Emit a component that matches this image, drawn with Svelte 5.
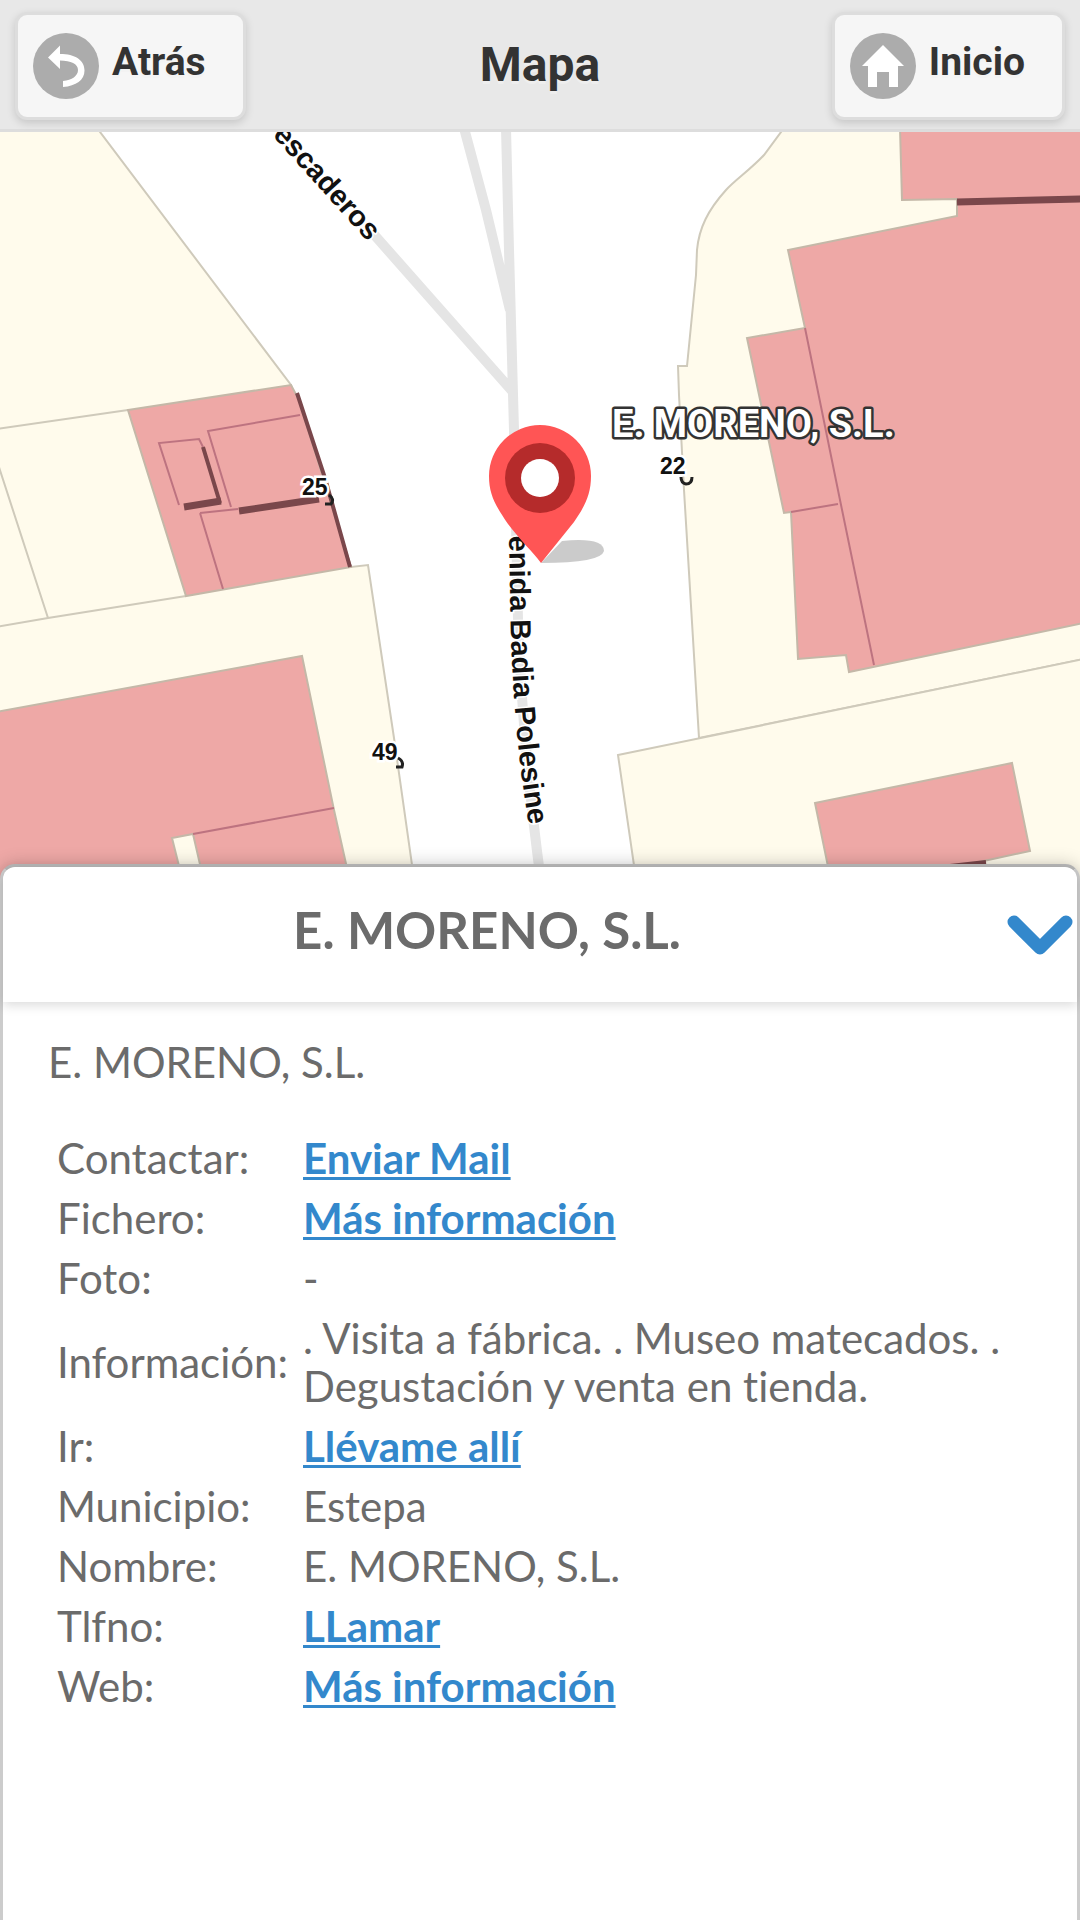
<script>
  const rows = [
    { label: 'Contactar:', value: 'Enviar Mail', href: '#mail' },
    { label: 'Fichero:', value: 'Más información', href: '#fichero' },
    { label: 'Foto:', value: '-' },
    { label: 'Información:', value: '. Visita a fábrica. . Museo matecados. . Degustación y venta en tienda.' },
    { label: 'Ir:', value: 'Llévame allí', href: '#ir' },
    { label: 'Municipio:', value: 'Estepa' },
    { label: 'Nombre:', value: 'E. MORENO, S.L.' },
    { label: 'Tlfno:', value: 'LLamar', href: '#tel' },
    { label: 'Web:', value: 'Más información', href: '#web' }
  ];
</script>

<div class="page">
  <header class="bar">
    <button class="nav" type="button">
      <svg class="disc" viewBox="0 0 66 66" aria-hidden="true">
        <circle cx="33" cy="33" r="33" fill="#acacac" />
        <path d="M15 24.500 27 12.500V21c15 0 24.500 6 24.500 16.500C51.500 47 43 53 30 54v-6c9-1 15-5 15-11 0-6-7-9.500-18-9.500V36Z" fill="#fff" />
      </svg>
      <span>Atrás</span>
    </button>
    <h1>Mapa</h1>
    <button class="nav" type="button">
      <svg class="disc" viewBox="0 0 66 66" aria-hidden="true">
        <circle cx="33" cy="33" r="33" fill="#acacac" />
        <path d="M33 12 54 33H48V54H39V39H27V54H18V33H12Z" fill="#fff" />
      </svg>
      <span>Inicio</span>
    </button>
  </header>

  <main>
    <svg class="map" viewBox="0 132 1080 750" preserveAspectRatio="xMidYMin slice" role="img" aria-label="Mapa">
      <rect y="132" width="1080" height="750" fill="#fff" />
      <g class="plot">
        <path d="M-4 128H97L291 385 351 567 368 565 394 738 415 886H-4Z" />
        <path d="M784 128 764 155C750 170 735 180 726 190 708 210 699 228 697 250L696 275 687 366H678L679 395 684 490 699 738 1084 659V128Z" />
        <path d="M618 755 1084 659V886H637Z" />
        <path class="line" d="M-4 429 128 410M-4 458 48 618M-4 627 48 618 186 596" />
      </g>
      <g class="road">
        <path d="M464 128 486 210 510 310M506 128 509 250 514 430 518 620Q522 740 541 882M370 230 513 392" />
      </g>
      <g class="building">
        <path d="M128 410 291 385 299 400 351 567 186 596Z" />
        <path d="M-4 712 302 656 334 810 351 886H205L193 834 172 838 184 886H-4Z" />
        <path d="M900 128 902 200 957 199V216L788 250 805 328 747 338 784 513 791 512 798 659 846 655 849 672 1084 623V128Z" />
        <path d="M815 803 1012 763 1030 851 970 864 832 886Z" />
      </g>
      <g class="inner">
        <path d="M300 415 208 431 231 507M179 505 159 443 199 439 203 447M200 513 238 509M200 513 223 589M193 834 334 808M805 328 840 500 874 665M791 512 838 504" />
      </g>
      <g class="wall">
        <path class="thin" d="M297 393 325 478 350 567M203 447 220 503" />
        <path class="thick" d="M184 507 221 501M239 511 319 499M957 202 1084 199" />
        <path class="thin" d="M950 866 986 862" />
      </g>
      <path id="avenida" d="M507 440 511 640Q515 745 529 825" fill="none" />
      <g class="street">
        <text transform="translate(368 242) rotate(48)" text-anchor="end">escaderos</text>
        <text text-anchor="end"><textPath href="#avenida" startOffset="100%">enida Badia Polesine</textPath></text>
      </g>
      <g class="number">
        <text x="302" y="495">25</text>
        <text x="660" y="474">22</text>
        <text x="372" y="760">49</text>
      </g>
      <g class="hook">
        <path d="M329 495q6 4 2 9h-6M681 477q0 6 5 7 6 0 6-7M398 758q6 3 4 9h-6" />
      </g>

      <path d="M541 563 562 541Q604 537 604 551 601 563 541 563Z" fill="#cbcbcb" />
      <path d="M541 563C533 552 520 540 508 524 495 505 489 494 489 476A51 51 0 0 1 591 476C591 494 585 506 574 522Z" fill="#ff5555" />
      <circle cx="540" cy="478" r="35" fill="#b52b2b" />
      <circle cx="540" cy="478" r="19" fill="#fff" />
      <text class="place" x="612" y="437">E. MORENO, S.L.</text>
    </svg>

    <section class="sheet">
      <div class="head">
        <h2>E. MORENO, S.L.</h2>
        <button class="close" type="button" aria-label="Cerrar">
          <svg viewBox="0 0 66 42" aria-hidden="true"><path d="M7 8 33 34 59 8" /></svg>
        </button>
      </div>
      <div class="body">
        <p>E. MORENO, S.L.</p>
        <table>
          <tbody>
            {#each rows as row}
              <tr>
                <th scope="row">{row.label}</th>
                <td>{#if row.href}<a href={row.href}>{row.value}</a>{:else}{row.value}{/if}</td>
              </tr>
            {/each}
          </tbody>
        </table>
      </div>
    </section>
  </main>
</div>

<style>
  :global(body) { background: #fff; }
  .page { min-height: 100vh; display: flex; flex-direction: column; font-family: Lato, sans-serif; font-variant-ligatures: none; color: #6b6b6b; }
  .bar {
    display: grid; grid-template-columns: 1fr auto 1fr; align-items: center; height: 132px; box-sizing: border-box;
    padding: 3px 15px 0; background: #e8e8e8; border-bottom: 3px solid #ddd; color: #333; font-family: Roboto, sans-serif;
  }
  h1 { margin: 0; padding-bottom: 2px; font-size: 48px; line-height: 60px; text-shadow: 0 3px 0 #eee; }
  .nav {
    display: flex; align-items: center; gap: 13px; height: 108px; box-sizing: border-box; justify-self: start;
    padding: 0 37px 0 15px; border: 3px solid #ddd; border-radius: 12px; background: #f6f6f6;
    box-shadow: 0 3px 9px rgb(0 0 0 / 15%); color: #333; font: bold 39px/48px Roboto, sans-serif; text-shadow: 0 3px 0 #f3f3f3;
  }
  .nav:last-child { justify-self: end; }
  .nav span { padding-bottom: 8px; }
  .disc { width: 66px; height: 66px; }
  main { flex: 1; display: flex; flex-direction: column; }
  .map { display: block; width: 100%; height: 750px; }
  .plot path { fill: #fffbec; stroke: #cfcabb; stroke-width: 2; }
  .plot .line { fill: none; }
  .road path { fill: none; stroke: #e5e5e5; stroke-width: 10; }
  .building path { fill: #eea8a6; stroke: #c4b8a8; stroke-width: 2; }
  .inner path { fill: none; stroke: #bd7380; stroke-width: 2; }
  .wall path { fill: none; stroke: #7a474b; }
  .wall .thin { stroke-width: 4; }
  .wall .thick { stroke-width: 7; }
  .street text, .number text { font-family: "Liberation Sans", sans-serif; font-weight: bold; fill: #111; stroke: #fff; paint-order: stroke; }
  .street text { font-size: 29px; stroke-width: 3; }
  .number text { font-size: 23px; stroke-width: 5; }
  .hook path { fill: none; stroke: #222; stroke-width: 3; }
  .place { font: bold 38px Roboto, sans-serif; fill: #fff; stroke: #333; stroke-width: 5; stroke-linejoin: round; paint-order: stroke; }
  .sheet {
    flex: 1; position: relative; margin-top: -18px; border: 3px solid #ccc; border-top-color: #b5b5b5; border-bottom: 0;
    border-radius: 15px 15px 0 0; background: #fff; box-shadow: 0 0 18px rgb(0 0 0 / 20%);
  }
  .head {
    display: flex; align-items: center; height: 135px; padding-right: 4px; border-radius: 12px 12px 0 0;
    box-shadow: 0 3px 12px rgb(0 0 0 / 15%);
  }
  h2 { flex: 1; margin: 0; padding: 0 36px 10px 0; text-align: center; font-size: 51px; line-height: 60px; }
  .close { display: flex; padding: 0; border: 0; background: none; }
  .close svg { width: 66px; height: 42px; fill: none; stroke: #38c; stroke-width: 13; stroke-linecap: round; stroke-linejoin: round; }
  .body { padding: 36px 45px; font-size: 42px; line-height: 48px; }
  p { margin: 0 0 39px; }
  table { border-spacing: 6px; }
  th, td { padding: 3px; text-align: left; font-weight: normal; }
  th { width: 234px; }
  a { color: #38c; font-weight: bold; text-decoration: underline 3px; text-underline-offset: 3px; text-decoration-skip-ink: none; }
</style>
